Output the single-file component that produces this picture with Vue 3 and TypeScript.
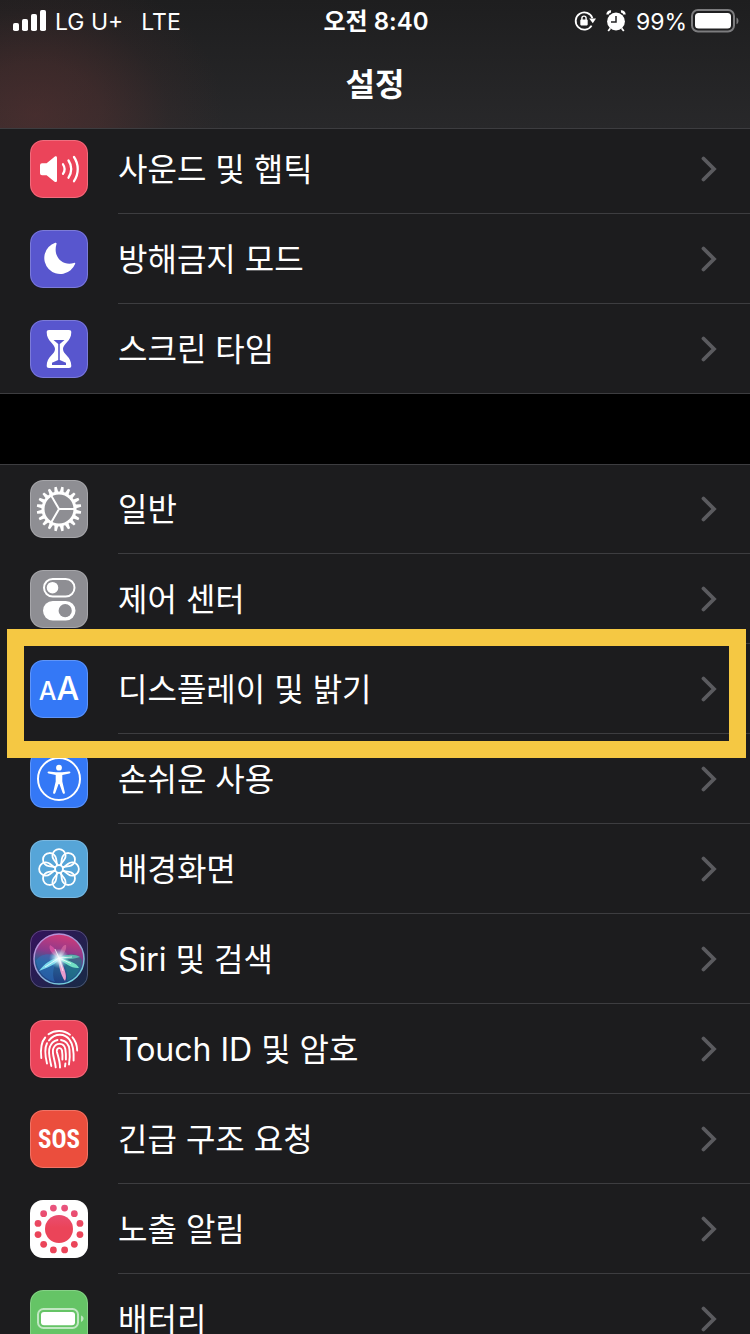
<script setup lang="ts">
interface Item {
  id: string
  label: string
  color: string
  focused?: boolean
}

const groups: Item[][] = [
  [
    { id: 'sound', label: '사운드 및 햅틱', color: '#eb445a' },
    { id: 'moon', label: '방해금지 모드', color: '#5856ce' },
    { id: 'hourglass', label: '스크린 타임', color: '#5856ce' },
  ],
  [
    { id: 'gear', label: '일반', color: '#8e8e93' },
    { id: 'toggles', label: '제어 센터', color: '#8e8e93' },
    { id: 'display', label: '디스플레이 및 밝기', color: '#3478f6', focused: true },
    { id: 'access', label: '손쉬운 사용', color: '#3478f6' },
    { id: 'wallpaper', label: '배경화면', color: '#56a5d8' },
    { id: 'siri', label: 'Siri 및 검색', color: '#1f1a3d' },
    { id: 'touch', label: 'Touch ID 및 암호', color: '#eb445a' },
    { id: 'sos', label: '긴급 구조 요청', color: '#eb4e3d' },
    { id: 'exposure', label: '노출 알림', color: '#ffffff' },
    { id: 'battery', label: '배터리', color: '#65c466' },
  ],
]

const polar = (r: number, deg: number): string => {
  const a = (deg * Math.PI) / 180
  return `${(29 + r * Math.cos(a)).toFixed(2)} ${(29 + r * Math.sin(a)).toFixed(2)}`
}

const gearTeeth: string = Array.from({ length: 20 }, (_, i) => {
  const a = i * 18 + 9
  return `M${polar(16.5, a - 7)}L${polar(22.3, a - 3)}L${polar(22.3, a + 3)}L${polar(16.5, a + 7)}Z`
}).join('')

const petals: number[] = Array.from({ length: 8 }, (_, i) => i * 45)
const dots: number[] = Array.from({ length: 12 }, (_, i) => i * 30 + 15)
</script>

<template>
  <div class="screen">
    <header class="header">
      <div class="status">
        <div class="side">
          <svg class="signal" width="34" height="22" viewBox="0 0 34 22" fill="#fff" aria-hidden="true">
            <rect x="0" y="13" width="6" height="8" rx="1.8" />
            <rect x="9" y="9" width="6" height="12" rx="1.8" />
            <rect x="18" y="4" width="6" height="17" rx="1.8" />
            <rect x="27" y="0" width="6" height="21" rx="1.8" />
          </svg>
          <span class="carrier">LG U+</span>
          <span>LTE</span>
        </div>
        <div class="time">오전 8:40</div>
        <div class="side end">
          <svg width="22" height="22" viewBox="0 0 22 22" fill="none" aria-hidden="true">
            <path d="M17.6 15.6A8.6 8.6 0 1 1 18.4 8.2" stroke="#fff" stroke-width="1.8" />
            <path d="M15.2 8.6H22L18.8 13.2Z" fill="#fff" />
            <rect x="6.3" y="9.6" width="7.4" height="5.8" rx="0.8" fill="#fff" />
            <path d="M7.9 10V8.2a2.1 2.1 0 0 1 4.2 0V10" stroke="#fff" stroke-width="1.4" />
          </svg>
          <svg class="alarm" width="20" height="22" viewBox="0 0 20 22" fill="none" aria-hidden="true">
            <circle cx="10" cy="11.5" r="8.9" fill="#fff" />
            <path d="M1.6 4.6A3 3 0 0 1 5 1.6M15 1.6a3 3 0 0 1 3.4 3" stroke="#fff" stroke-width="2.6" />
            <path d="M4.4 18.2 2.2 21M15.6 18.2 17.8 21" stroke="#fff" stroke-width="1.8" />
            <path d="M10 6v6H5" stroke="#232324" stroke-width="1.5" />
          </svg>
          <span class="percent">99%</span>
          <svg class="cell" width="48" height="24" viewBox="0 0 48 24" fill="none" aria-hidden="true">
            <rect x="1" y="1" width="42" height="21.5" rx="6" stroke="#7c7c7e" stroke-width="2" />
            <rect x="4" y="4" width="36" height="15.5" rx="3.5" fill="#fff" />
            <path d="M45.5 8.5c2.6 1.2 2.6 5.6 0 6.8Z" fill="#7c7c7e" />
          </svg>
        </div>
      </div>
      <h1 class="title">설정</h1>
    </header>

    <main class="list">
      <nav v-for="(group, g) in groups" :key="g" class="group">
        <a
          v-for="item in group"
          :key="item.id"
          href="#"
          class="row"
          :class="{ focused: item.focused }"
        >
          <span class="tile" :style="{ backgroundColor: item.color }">
            <span v-if="item.id === 'display'" class="letters"><span class="small">A</span><span>A</span></span>
            <span v-else-if="item.id === 'sos'" class="sos">SOS</span>
            <svg v-else viewBox="0 0 58 58" fill="none" aria-hidden="true">
              <g v-if="item.id === 'sound'">
                <path
                  d="M12 23.2h4.6l8-6.5c1-.8 2.4-.3 2.4 1v23c0 1.3-1.4 1.8-2.4 1l-8-6.5H12a2 2 0 0 1-2-2v-8a2 2 0 0 1 2-2Z"
                  fill="#fff"
                />
                <path
                  d="M33 24.3a8.5 8.5 0 0 1 0 9.6M38.5 20.5a15 15 0 0 1 0 17.2M44 17a21.5 21.5 0 0 1 0 24.2"
                  stroke="#fff"
                  stroke-width="2.3"
                  stroke-linecap="round"
                />
              </g>
              <path
                v-else-if="item.id === 'moon'"
                d="M25.3 12.8A16 16 0 1 0 45.2 33.8C45.5 33 44.8 32.6 44 32.9C33 36.5 22.5 27 26.5 14C26.8 13 26.2 12.5 25.3 12.8Z"
                fill="#fff"
              />
              <g v-else-if="item.id === 'hourglass'">
                <path
                  d="M19 10h20c1.5 0 2.3.8 2.3 2.2C41.3 21.5 33 23.5 33 29s8.3 7.5 8.3 16.8c0 1.4-.8 2.2-2.3 2.2H19c-1.5 0-2.3-.8-2.3-2.2C16.7 36.5 25 34.5 25 29s-8.3-7.5-8.3-16.8c0-1.4.8-2.2 2.3-2.2Z"
                  fill="#fff"
                />
                <path d="M23.5 20h11l-4.7 4V40l6.2 2.7V45H22V42.7L28.2 40V24Z" fill="#5856ce" />
              </g>
              <g v-else-if="item.id === 'gear'">
                <path :d="gearTeeth" fill="#fff" />
                <circle cx="29" cy="29" r="16" stroke="#fff" stroke-width="3" />
                <path d="M29 29H45M29 29 21 15.2M29 29 21 42.8" stroke="#fff" stroke-width="2" />
              </g>
              <g v-else-if="item.id === 'toggles'">
                <rect x="14" y="9" width="30.5" height="17.5" rx="8.75" stroke="#fff" stroke-width="2" />
                <circle cx="22.5" cy="17.7" r="5.8" fill="#fff" />
                <rect x="13" y="31" width="32.5" height="19.5" rx="9.75" fill="#fff" />
                <circle cx="35.2" cy="40.7" r="6.6" fill="#8e8e93" />
              </g>
              <g v-else-if="item.id === 'access'">
                <circle cx="29" cy="29" r="21" stroke="#fff" stroke-width="2" />
                <circle cx="29" cy="17.7" r="2.9" fill="#fff" />
                <path
                  d="M19 21.4 26 22.3h6l7-.9c1.7-.2 2 1.7.4 2.1L32.3 25v6.5l2.6 11c.3 1.5-1.7 1.9-2.2.5L29.4 34h-.8L25.3 43c-.5 1.4-2.5 1-2.2-.5l2.6-11V25l-7.1-1.5c-1.6-.4-1.3-2.3.4-2.1Z"
                  fill="#fff"
                />
              </g>
              <g v-else-if="item.id === 'wallpaper'" stroke="#fff" stroke-width="1.8">
                <path
                  v-for="a in petals"
                  :key="a"
                  :transform="`rotate(${a} 29 29)`"
                  d="M28 25.2L23.8 19.8A6.6 6.6 0 1 1 34.2 19.8L30 25.2"
                />
                <circle cx="29" cy="29" r="3.9" />
              </g>
              <g v-else-if="item.id === 'siri'">
                <defs>
                  <linearGradient id="siri-back" x1="0" y1="0" x2="1" y2="1">
                    <stop offset="0" stop-color="#35125c" />
                    <stop offset="1" stop-color="#172b45" />
                  </linearGradient>
                  <linearGradient id="siri-orb" x1="0.6" y1="0" x2="0.4" y2="1">
                    <stop offset="0" stop-color="#d23a78" />
                    <stop offset="0.38" stop-color="#8c3a8c" />
                    <stop offset="0.62" stop-color="#285f91" />
                    <stop offset="1" stop-color="#1d3c80" />
                  </linearGradient>
                  <linearGradient id="siri-ring" x1="0" y1="0" x2="0.6" y2="1">
                    <stop offset="0" stop-color="#c58bdc" />
                    <stop offset="0.5" stop-color="#a29ad4" />
                    <stop offset="1" stop-color="#72cfdc" />
                  </linearGradient>
                  <radialGradient id="siri-glow">
                    <stop offset="0" stop-color="#fff" />
                    <stop offset="0.35" stop-color="#d9fbff" stop-opacity="0.8" />
                    <stop offset="1" stop-color="#7ae5ee" stop-opacity="0" />
                  </radialGradient>
                </defs>
                <rect width="58" height="58" fill="url(#siri-back)" />
                <circle cx="29" cy="29" r="25" fill="url(#siri-orb)" stroke="url(#siri-ring)" stroke-width="1.5" />
                <path d="M29 27C20 22 9 24 6 31C8 44 17 50 25 52C21 44 24 34 29 27Z" fill="#2d76c4" opacity="0.5" />
                <path d="M30 27C40 22 51 24 52 31C49 44 43 49 37 51C38 42 35 34 30 27Z" fill="#1f7f86" opacity="0.55" />
                <path d="M29 28C23 25 18 20 20 15C24 17 28 22 29 28Z" fill="#e75aa9" opacity="0.7" />
                <path d="M29 28C30 20 33 14 36 15C37 19 34 25 29 28Z" fill="#f082b0" opacity="0.5" />
                <path d="M28 28C21 29 14 34 9 41C17 38 26 34 30 29Z" fill="#83e5f4" opacity="0.9" />
                <path d="M29 28C36 24 45 24 50 27C44 29 36 30 29 29Z" fill="#67dfc2" opacity="0.65" />
                <path d="M29 28C38 30 47 33 49 38C42 39 35 33 29 29Z" fill="#79ecca" opacity="0.9" />
                <path d="M28 29C29 37 31 46 35 51C38 46 33 35 30 29Z" fill="#f4a1d1" opacity="0.95" />
                <circle cx="29" cy="28.5" r="10" fill="url(#siri-glow)" />
                <path d="M29 28 15 37M29 28 42 27M29 28 41 33.5M29 28 33 41M29 28 25 19" stroke="#fff" opacity="0.7" />
              </g>
              <g v-else-if="item.id === 'touch'" stroke="#fff" stroke-width="1.9" stroke-linecap="round">
                <path d="M18.5 14.3A18.5 18.5 0 0 1 40 14.7M42.5 17.3C45.5 20.5 47 25 47.2 30.5M15.2 17.5C10.8 22.5 10.3 29 11.3 38" />
                <path d="M17 43.5C15.4 37 13.7 29.5 17 23.2M19 20.4C25.5 12.5 35 13.5 39.6 19.8C44 25.5 43.9 33 43.6 40.5" />
                <path d="M21.3 46C20 39.5 17.5 32 20 26.5A10.3 10.3 0 0 1 27.5 20M31 20C36.5 20.8 39 25 39.5 30C40 35 39.8 40 39 44.5" />
                <path d="M25.7 47.3C25 40 21.5 33 23.3 28.5C26 22 34 22.5 35.3 29C36 33 36 35.5 35.9 39.5M35.4 43.5 35 46.5" />
                <path d="M30 47.5C30 41.5 28.3 37 26.9 32C26 27.5 31.5 26.5 32 31C32.6 34.5 32.5 37.5 32.4 39.5" />
              </g>
              <g v-else-if="item.id === 'exposure'">
                <defs>
                  <linearGradient id="warm" gradientUnits="userSpaceOnUse" x1="0" y1="4" x2="0" y2="44">
                    <stop offset="0" stop-color="#e85582" />
                    <stop offset="0.6" stop-color="#eb4459" />
                  </linearGradient>
                </defs>
                <circle cx="29" cy="29" r="14" fill="url(#warm)" />
                <circle
                  v-for="a in dots"
                  :key="a"
                  :cx="29 + 21.7 * Math.cos((a * Math.PI) / 180)"
                  :cy="29 + 21.7 * Math.sin((a * Math.PI) / 180)"
                  r="3.4"
                  fill="url(#warm)"
                />
              </g>
              <g v-else-if="item.id === 'battery'">
                <rect x="8" y="19" width="40" height="19" rx="5.5" stroke="#c1e7c2" stroke-width="2" />
                <rect x="11" y="22" width="34" height="13.3" rx="3" fill="#fff" />
                <path d="M51 25.5c3.4 1 3.4 5 0 6.5Z" fill="#c1e7c2" />
              </g>
            </svg>
          </span>
          <span class="label">
            <span class="text">{{ item.label }}</span>
            <svg class="chevron" width="16" height="26" viewBox="0 0 16 26" fill="none" aria-hidden="true">
              <path d="M2.5 2.5 13 13 2.5 23.5" stroke="#5b5b5f" stroke-width="3.8" stroke-linecap="round" />
            </svg>
          </span>
        </a>
      </nav>
    </main>
  </div>
</template>

<style>
body {
  background: #000;
}
</style>

<style scoped>
.screen {
  display: flex;
  flex-direction: column;
  height: 100vh;
  overflow: hidden;
  background: #000;
  color: #fff;
  font-family: Inter, 'Noto Sans CJK KR', sans-serif;
}

.header {
  position: relative;
  z-index: 2;
  flex: none;
  border-bottom: 1px solid #3d3d40;
  background:
    radial-gradient(
      ellipse 190px 150px at 35px 115px,
      rgba(120, 56, 54, 0.38),
      rgba(120, 56, 54, 0.28) 35%,
      rgba(120, 56, 54, 0.08) 70%,
      rgba(120, 56, 54, 0)
    ),
    linear-gradient(#1e1e1f, #28282a);
}

.status {
  display: grid;
  grid-template-columns: 1fr auto 1fr;
  align-items: center;
  height: 40px;
  padding: 0 11px 0 13px;
  font-size: 24px;
  line-height: 40px;
  white-space: nowrap;
}

.side {
  display: flex;
  align-items: center;
  font-size: 23px;
}

.side span,
.time {
  padding-top: 2px;
}

.signal {
  margin-right: 8px;
}

.carrier {
  margin-right: 18px;
}

.end {
  justify-content: flex-end;
}

.alarm {
  margin: 0 10px;
}

.cell {
  margin-left: 4px;
}

.time {
  font-weight: 600;
}

.title {
  margin: 0;
  padding: 21px 0 19px;
  font-size: 32px;
  line-height: 48px;
  font-weight: 600;
  text-align: center;
}

.list {
  flex: 1;
  min-height: 0;
  margin-top: -5px;
  overflow-y: auto;
  scrollbar-width: none;
}

.group {
  margin-bottom: 70px;
  background: #1c1c1e;
  box-shadow: inset 0 1px #3d3d40;
}

.row {
  position: relative;
  display: flex;
  align-items: center;
  gap: 30px;
  height: 90px;
  padding-left: 30px;
  color: inherit;
  text-decoration: none;
}

.focused {
  z-index: 1;
}

.focused::after {
  content: '';
  position: absolute;
  inset: -15px 4px -24px 7px;
  border: 17px solid #f5c843;
}

.tile {
  display: flex;
  flex: none;
  align-items: center;
  justify-content: center;
  position: relative;
  width: 58px;
  height: 58px;
  border-radius: 13px;
  overflow: hidden;
}

.tile::after {
  content: '';
  position: absolute;
  inset: 0;
  border: 1px solid rgba(255, 255, 255, 0.22);
  border-radius: 13px;
}

.tile svg {
  width: 58px;
  height: 58px;
}

.letters {
  display: flex;
  align-items: baseline;
  padding-top: 2px;
  font-size: 32px;
  font-weight: 500;
  line-height: 56px;
}

.small {
  font-size: 25px;
}

.sos {
  font-family: 'Liberation Sans Narrow', 'Roboto Condensed', Roboto, sans-serif;
  font-size: 25px;
  font-weight: 700;
}

.label {
  display: flex;
  flex: 1;
  align-items: center;
  justify-content: space-between;
  align-self: stretch;
  padding-right: 33px;
  border-bottom: 1px solid #3d3d40;
}

.row:last-child .label {
  border-bottom-color: transparent;
}

.group .row:last-child {
  box-shadow: inset 0 -1px #3d3d40;
}

.text {
  padding-top: 3px;
  font-size: 32px;
  line-height: 48px;
}
</style>
